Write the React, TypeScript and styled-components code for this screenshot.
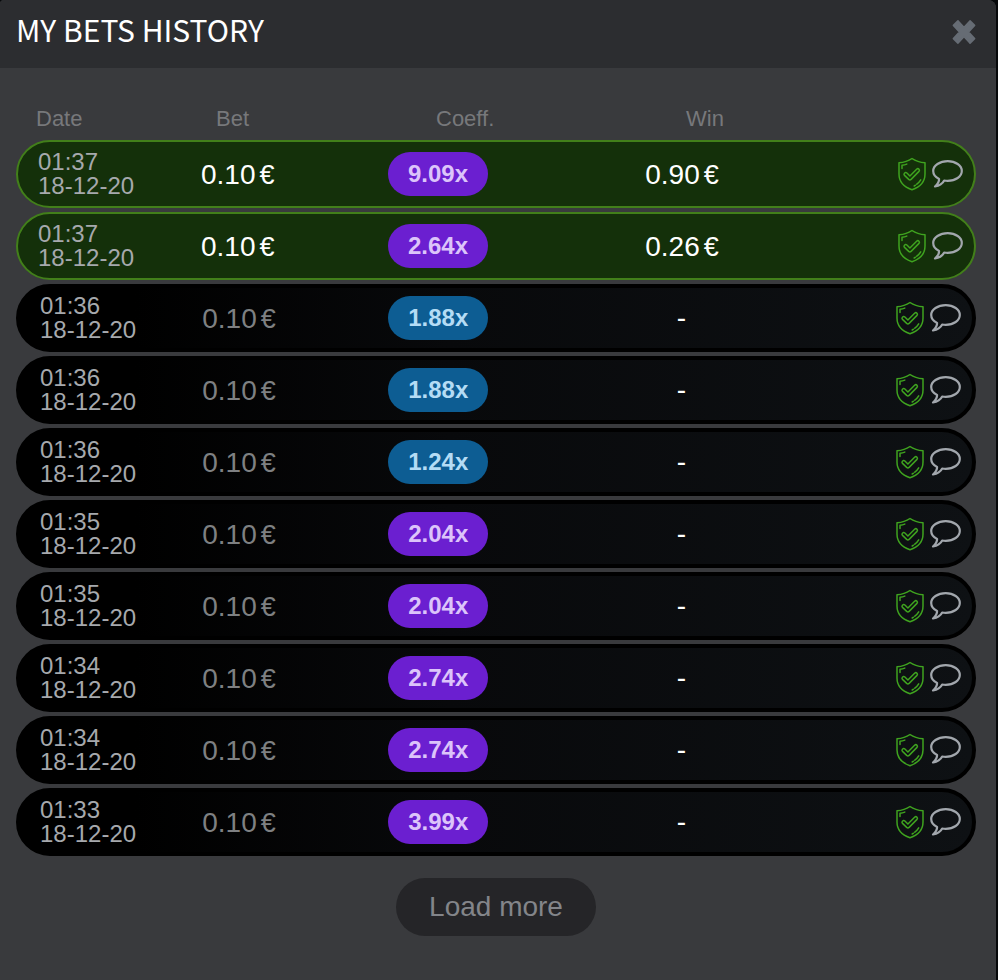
import React from "react";
import styled, { createGlobalStyle, css } from "styled-components";

const GlobalStyle = createGlobalStyle`
  *, *::before, *::after { box-sizing: border-box; }
  html, body, #root { height: 100%; }
  body {
    margin: 0;
    background: #07090b;
    font-family: "Liberation Sans", Arial, sans-serif;
  }
  button { font: inherit; border: 0; padding: 0; background: none; cursor: pointer; }
`;

const Dialog = styled.section`
  min-height: 100%;
  margin-right: 2px;
  background: #393a3d;
  border-radius: 4px 8px 0 0;
  overflow: hidden;
`;

const Header = styled.header`
  display: flex;
  align-items: center;
  justify-content: space-between;
  height: 68px;
  padding: 0 20px 4px 16px;
  background: #2c2d30;
`;

const Title = styled.h1`
  margin: 0;
  padding-bottom: 6px;
  color: #fff;
  font: 400 30px/40px "Noto Sans CJK SC", "Roboto", sans-serif;
  text-transform: uppercase;
`;

const CloseButton = styled.button`
  display: flex;
  color: #666c74;
`;

const Content = styled.div`
  padding: 36px 20px 44px 16px;
`;

const BetsTable = styled.table`
  display: block;
  width: 100%;
`;

const TableHead = styled.thead`
  display: block;
`;

const HeadRow = styled.tr`
  display: grid;
  grid-template-columns: 180fr 220fr 250fr 290fr;
  height: 36px;
  padding-left: 20px;
`;

const HeadCell = styled.th`
  padding: 0;
  color: #77787b;
  font-size: 22px;
  font-weight: 400;
  line-height: 30px;
  text-align: left;
`;

const TableBody = styled.tbody`
  display: grid;
  gap: 4px;
`;

const BetRow = styled.tr<{ $won: boolean }>`
  display: grid;
  grid-template-columns: 163fr 187fr 100fr 388fr 87fr;
  align-items: center;
  height: 68px;
  padding: 0 11px 0 20px;
  border-radius: 34px;
  color: #fff;
  ${({ $won }) =>
    $won
      ? css`
          background: #14300a;
          border: 2px solid #427f1a;
        `
      : css`
          background: linear-gradient(90deg, #000 0%, #000 12%, #08090b 45%, #0e1114 100%);
          border: 4px solid #000;
        `}
`;

const Cell = styled.td`
  padding: 0;
`;

const DateCell = styled(Cell)`
  color: #a6a9ad;
  font-size: 24px;
  line-height: 24px;
`;

const DateLine = styled.span`
  display: block;
`;

const AmountCell = styled(Cell)`
  padding-top: 2px;
  font-size: 28px;
  line-height: 32px;
`;

const BetCell = styled(AmountCell)<{ $won: boolean }>`
  color: ${({ $won }) => ($won ? "#fff" : "#7e8082")};
`;

const WinCell = styled(AmountCell)<{ $won: boolean }>`
  padding-top: ${({ $won }) => ($won ? "2px" : "0")};
  text-align: center;
`;

const Currency = styled.span`
  margin-left: 4px;
  font-size: 27px;
`;

const Coefficient = styled.span<{ $high: boolean }>`
  display: block;
  width: 100px;
  border-radius: 22px;
  background: ${({ $high }) => ($high ? "#6b1fd0" : "#0d5d93")};
  color: ${({ $high }) => ($high ? "#dcc4fa" : "#b4dcf5")};
  font-size: 24px;
  font-weight: 700;
  line-height: 44px;
  text-align: center;
`;

const Actions = styled.div`
  display: flex;
  align-items: center;
  justify-content: flex-end;
  gap: 6px;
`;

const IconButton = styled.button`
  display: flex;
`;

const Footer = styled.footer`
  display: flex;
  justify-content: center;
  margin-top: 22px;
`;

const LoadMore = styled.button`
  height: 58px;
  padding: 0 33px;
  border-radius: 29px;
  background: #252528;
  color: #83858a;
  font-size: 28px;
`;

const CloseIcon = () => (
  <svg width="24" height="26" viewBox="0 0 24 26" aria-hidden="true">
    <path
      d="M6 2 12 8.500 18 2 22.500 6.500 16.500 13 22.500 19.500 18 24 12 17.500 6 24 1.500 19.500 7.500 13 1.500 6.500Z"
      fill="currentColor"
      stroke="currentColor"
      strokeWidth="1.800"
      strokeLinejoin="round"
    />
  </svg>
);

const ShieldIcon = () => (
  <svg width="28" height="34" viewBox="0 0 28 34" fill="none" stroke="#3fa31f" strokeWidth="1.500" strokeLinecap="round" strokeLinejoin="round" aria-hidden="true">
    <path d="M14 1.500c3.600 2.500 8 3.900 13 4.200v11.300c0 7.500-5 13-13 15.700C6 30 1 24.500 1 17V5.700c5-.3 9.400-1.700 13-4.200Z" />
    <path d="M4 11.500V8.300c1.800-.2 3.300-.6 4.800-1.200" />
    <path d="M6.300 16.400c.7-1 1.700-1.200 2.600-.4l3 3 6.700-6.800c.8-.7 1.700-.7 2.400 0 .6.700.6 1.500 0 2.200l-7.900 8c-.8.700-1.600.7-2.400 0l-4.200-4c-.6-.6-.7-1.300-.2-2Z" />
    <path d="m16.200 29 1.300-.8M18.800 27.200c1.600-1.200 2.900-2.600 3.900-4.300" />
  </svg>
);

const ChatIcon = () => (
  <svg width="31" height="28" viewBox="0 0 31 28" fill="none" stroke="#a2a7ad" strokeWidth="2.200" strokeLinejoin="round" aria-hidden="true">
    <path d="M15.700 1.200C7.800 1.200 1.200 5.400 1.200 11c0 3.400 2.300 6.200 5.900 8 .1 2.500-1.200 4.900-4.100 7.500 4.300-.7 7.500-2.700 9.200-6 1.100.2 2.300.3 3.500.3 7.900 0 14.100-4.200 14.100-9.800S23.600 1.200 15.700 1.200Z" />
  </svg>
);

type Bet = { time: string; date: string; bet: string; coeff: string; win?: string };

const date = "18-12-20";
const bet = "0.10";
const bets: Bet[] = [
  { time: "01:37", date, bet, coeff: "9.09", win: "0.90" },
  { time: "01:37", date, bet, coeff: "2.64", win: "0.26" },
  { time: "01:36", date, bet, coeff: "1.88" },
  { time: "01:36", date, bet, coeff: "1.88" },
  { time: "01:36", date, bet, coeff: "1.24" },
  { time: "01:35", date, bet, coeff: "2.04" },
  { time: "01:35", date, bet, coeff: "2.04" },
  { time: "01:34", date, bet, coeff: "2.74" },
  { time: "01:34", date, bet, coeff: "2.74" },
  { time: "01:33", date, bet, coeff: "3.99" },
];

export default function App() {
  return (
    <>
      <GlobalStyle />
      <Dialog role="dialog" aria-labelledby="bets-title">
        <Header>
          <Title id="bets-title">My bets history</Title>
          <CloseButton type="button" aria-label="Close">
            <CloseIcon />
          </CloseButton>
        </Header>
        <Content>
          <BetsTable>
            <TableHead>
              <HeadRow>
                <HeadCell scope="col">Date</HeadCell>
                <HeadCell scope="col">Bet</HeadCell>
                <HeadCell scope="col">Coeff.</HeadCell>
                <HeadCell scope="col">Win</HeadCell>
              </HeadRow>
            </TableHead>
            <TableBody>
              {bets.map((item, index) => {
                const won = item.win !== undefined;
                return (
                  <BetRow key={index} $won={won}>
                    <DateCell>
                      <DateLine>{item.time}</DateLine>
                      <DateLine>{item.date}</DateLine>
                    </DateCell>
                    <BetCell $won={won}>
                      {item.bet}
                      <Currency>€</Currency>
                    </BetCell>
                    <Cell>
                      <Coefficient $high={Number(item.coeff) >= 2}>{item.coeff}x</Coefficient>
                    </Cell>
                    <WinCell $won={won}>
                      {won ? (
                        <>
                          {item.win}
                          <Currency>€</Currency>
                        </>
                      ) : (
                        "-"
                      )}
                    </WinCell>
                    <Cell>
                      <Actions>
                        <IconButton type="button" aria-label="Verify fairness">
                          <ShieldIcon />
                        </IconButton>
                        <IconButton type="button" aria-label="Share in chat">
                          <ChatIcon />
                        </IconButton>
                      </Actions>
                    </Cell>
                  </BetRow>
                );
              })}
            </TableBody>
          </BetsTable>
          <Footer>
            <LoadMore type="button">Load more</LoadMore>
          </Footer>
        </Content>
      </Dialog>
    </>
  );
}
